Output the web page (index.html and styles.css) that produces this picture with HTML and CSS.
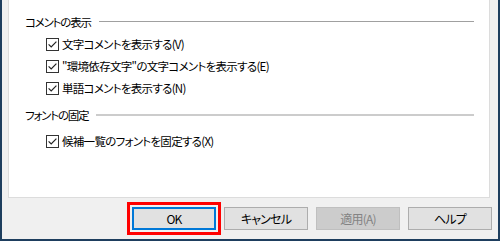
FILE: index.html
```html
<!DOCTYPE html>
<html lang="ja">
<head>
<meta charset="utf-8">
<link rel="stylesheet" href="styles.css">
</head>
<body>
<div class="window">
  <div class="panel">
    <div class="group">
      <div class="group-head"><span class="group-title">コメントの表示</span><span class="rule rule-dark"></span></div>
      <div class="rows">
        <label class="row"><span class="cb"><svg viewBox="0 0 13 13" width="13" height="13"><rect x="0.5" y="0.5" width="12" height="12" fill="#fff" stroke="#333"/><path d="M2.6 6.4 L5.2 9 L10.4 3.6" fill="none" stroke="#222" stroke-width="1.2"/></svg></span><span class="txt">文字コメントを表示する(V)</span></label>
        <label class="row"><span class="cb"><svg viewBox="0 0 13 13" width="13" height="13"><rect x="0.5" y="0.5" width="12" height="12" fill="#fff" stroke="#333"/><path d="M2.6 6.4 L5.2 9 L10.4 3.6" fill="none" stroke="#222" stroke-width="1.2"/></svg></span><span class="txt">"環境依存文字"の文字コメントを表示する(E)</span></label>
        <label class="row"><span class="cb"><svg viewBox="0 0 13 13" width="13" height="13"><rect x="0.5" y="0.5" width="12" height="12" fill="#fff" stroke="#333"/><path d="M2.6 6.4 L5.2 9 L10.4 3.6" fill="none" stroke="#222" stroke-width="1.2"/></svg></span><span class="txt">単語コメントを表示する(N)</span></label>
      </div>
    </div>
    <div class="group group2">
      <div class="group-head"><span class="group-title">フォントの固定</span><span class="rule rule-light"></span></div>
      <div class="rows rows2">
        <label class="row"><span class="cb"><svg viewBox="0 0 13 13" width="13" height="13"><rect x="0.5" y="0.5" width="12" height="12" fill="#fff" stroke="#333"/><path d="M2.6 6.4 L5.2 9 L10.4 3.6" fill="none" stroke="#222" stroke-width="1.2"/></svg></span><span class="txt">候補一覧のフォントを固定する(X)</span></label>
      </div>
    </div>
  </div>
  <div class="buttons">
    <button class="btn btn-default">OK</button>
    <button class="btn">キャンセル</button>
    <button class="btn btn-disabled">適用(A)</button>
    <button class="btn">ヘルプ</button>
  </div>
</div>
</body>
</html>
```
FILE: styles.css
```css
* { box-sizing: border-box; }
html, body { margin: 0; padding: 0; }
body {
  width: 500px;
  height: 241px;
  overflow: hidden;
  font-family: "Noto Sans CJK JP", "Noto Sans", sans-serif;
  font-size: 11.5px;
  letter-spacing: -0.7px;
  font-feature-settings: "palt";
  color: #000;
}
.window {
  width: 500px;
  height: 241px;
  background: #f0f0f0;
  border-left: 2px solid #1e3e5e;
  border-right: 2px solid #1e3e5e;
  border-bottom: 2px solid #1e3e5e;
  display: flex;
  flex-direction: column;
  padding: 0 8px 0 6px;
}
.panel {
  height: 198px;
  background: #fff;
  border: 1px solid #dcdcdc;
  border-top: none;
  padding: 13px 15px 0 16px;
}
.group-head {
  display: flex;
  align-items: center;
  height: 18px;
}
.group-title {
  line-height: 18px;
  white-space: nowrap;
  letter-spacing: -1.2px;
  padding-right: 8px;
}
.rule { flex: 1; }
.rule-dark { height: 1px; background: #a0a0a0; margin-top: -1px; }
.rule-light { height: 2px; background: #cccccc; margin-top: -1px; }
.rows {
  display: flex;
  flex-direction: column;
  gap: 4px;
  padding-left: 21px;
  margin-top: 4px;
}
.group2 { margin-top: 9px; }
.rows2 { margin-top: 8px; }
.row {
  display: flex;
  align-items: center;
  height: 18px;
  gap: 3px;
}
.cb { display: flex; width: 13px; height: 13px; }
.cb svg { display: block; }
.txt { line-height: 18px; white-space: nowrap; }
.buttons {
  display: flex;
  justify-content: flex-end;
  gap: 8px;
  padding-top: 9px;
  margin-right: -2px;
}
.btn {
  width: 84px;
  height: 23px;
  font-family: inherit;
  font-size: 12px;
  letter-spacing: -0.8px;
  font-feature-settings: "palt";
  color: #000;
  background: #e1e1e1;
  border: 1px solid #adadad;
  padding: 0;
  margin: 0;
}
.btn-default {
  border: 2px solid #0078d7;
  outline: 3px solid #ff0000;
  outline-offset: 2px;
}
.btn-disabled {
  background: #cccccc;
  border-color: #bfbfbf;
  color: #838383;
}
```
